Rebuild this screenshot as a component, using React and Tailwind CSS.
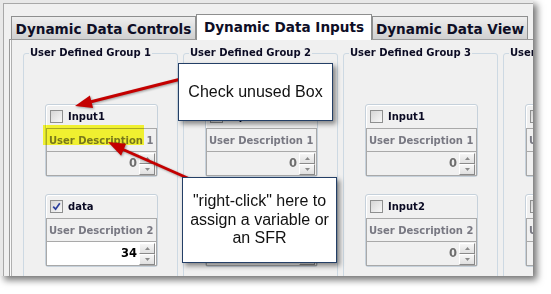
import React from "react";

const groups = [
  {
    title: "User Defined Group 1",
    items: [
      { label: "Input1", desc: "User Description 1", value: "0" },
      { label: "data", desc: "User Description 2", value: "34", checked: true },
    ],
  },
  {
    title: "User Defined Group 2",
    items: [
      { label: "Input1", desc: "User Description 1", value: "0" },
      { label: "Input2", desc: "User Description 2", value: "0" },
    ],
  },
  {
    title: "User Defined Group 3",
    items: [
      { label: "Input1", desc: "User Description 1", value: "0" },
      { label: "Input2", desc: "User Description 2", value: "0" },
    ],
  },
  {
    title: "User Defined Group 4",
    items: [
      { label: "Input1", desc: "User Description 1", value: "0" },
      { label: "Input2", desc: "User Description 2", value: "0" },
    ],
  },
];

function Check({ on }) {
  return (
    <span className="w-[13px] h-[13px] shrink-0 border border-[#8e8f8f] bg-gradient-to-br from-[#d6d6d6] to-[#f8f8f8] flex items-center justify-center">
      {on && (
        <svg width="9" height="9" viewBox="0 0 9 9">
          <path d="M1.2 4.6 L3.6 7.2 L7.8 1.2" fill="none" stroke="#2b3f9c" strokeWidth="1.7" />
        </svg>
      )}
    </span>
  );
}

function Spin() {
  return (
    <div className="ml-[2px] flex flex-col w-[16px] h-[22px]">
      <div className="flex-1 flex items-center justify-center border border-[#8a8a8a] border-l-white border-t-white bg-gradient-to-b from-[#f6f6f6] to-[#e0e0e0]">
        <svg width="5" height="3" viewBox="0 0 5 3">
          <path d="M0 3 L2.5 0 L5 3Z" fill="#8a8a8a" />
        </svg>
      </div>
      <div className="flex-1 flex items-center justify-center border border-[#8a8a8a] border-l-white border-t-white bg-gradient-to-b from-[#f6f6f6] to-[#e0e0e0]">
        <svg width="5" height="3" viewBox="0 0 5 3">
          <path d="M0 0 L2.5 3 L5 0Z" fill="#8a8a8a" />
        </svg>
      </div>
    </div>
  );
}

function Item({ label, desc, value, checked }) {
  return (
    <div className="w-[113px] rounded-[3px] border border-[#c6d1db] shadow-[inset_1px_1px_0_#ffffff]">
      <div className="h-[23px] flex items-center pl-[4px] gap-[5px]">
        <Check on={checked} />
        <span className="text-[10px] font-bold text-[#0b0b24]">{label}</span>
      </div>
      <div className="border border-[#a9a9a9]">
        <div className="h-[23px] flex items-center pl-[2px] border-b border-[#a9a9a9] text-[10px] font-bold text-[#787882] whitespace-nowrap">
          {desc}
        </div>
        <div
          className={`h-[23px] flex items-center justify-end pr-[1px] ${
            checked ? "bg-white" : ""
          }`}
        >
          <span className={`text-[11.5px] font-bold ${checked ? "text-black" : "text-[#6e6e6e]"}`}>
            {value}
          </span>
          <Spin />
        </div>
      </div>
    </div>
  );
}

function Group({ title, items }) {
  return (
    <fieldset className="w-[155px] h-[240px] shrink-0 border border-[#cdd9e3] rounded-[3px]">
      <legend className="ml-[5px] px-[1px] text-[10px] leading-[12px] font-bold text-[#0c0c24] whitespace-nowrap">
        {title}
      </legend>
      <div className="mt-[45px] pl-[21px] flex flex-col gap-[17px]">
        {items.map((it, i) => (
          <Item key={i} {...it} />
        ))}
      </div>
    </fieldset>
  );
}

function Tab({ children, active, w }) {
  if (active) {
    return (
      <div
        className={`${w} h-[26px] bg-white border border-b-0 border-[#8e8f8f] flex items-center justify-center text-[13.6px] font-bold text-[#0e0e26] whitespace-nowrap`}
      >
        {children}
      </div>
    );
  }
  return (
    <div
      className={`${w} h-[23px] mb-[1px] bg-gradient-to-b from-[#eeeeee] to-[#d0d0d0] border border-b-0 border-[#8e8f8f] flex items-center justify-center pt-[2px] text-[13.6px] font-bold text-[#0e0e26] whitespace-nowrap`}
    >
      {children}
    </div>
  );
}

export default function App() {
  return (
    <div className="relative w-[551px] h-[294px] bg-white overflow-hidden font-['DejaVu_Sans',sans-serif]">
      <div className="w-[533px] h-[276px] bg-[#e8e8e8] pt-[3px] pl-[3px] shadow-[4px_4px_7px_rgba(0,0,0,0.55)] overflow-hidden">
        <div className="h-full border-t border-l border-[#a8a8a8] bg-[#f0f0f0] pt-[10px]">
          <div className="relative z-10 -mb-px ml-[7px] flex items-end">
            <Tab w="w-[185px]">Dynamic Data Controls</Tab>
            <Tab w="w-[176px]" active>
              Dynamic Data Inputs
            </Tab>
            <Tab w="w-[156px]">Dynamic Data View</Tab>
          </div>
          <div className="ml-[5px] w-[600px] h-[260px] border-l border-t border-[#9a9a9a] shadow-[inset_1px_0_0_#fafafa,inset_2px_0_0_#b0b0b0] pt-[7px] pl-[13px] flex gap-[5px]">
            {groups.map((g, i) => (
              <Group key={i} {...g} />
            ))}
          </div>
        </div>
      </div>

      {/* highlight */}
      <div className="absolute left-[43px] top-[125px] w-[101px] h-[20px] bg-[#ffff00]/80 mix-blend-multiply" />

      {/* arrows */}
      <svg className="absolute left-0 top-0 pointer-events-none" width="551" height="294">
        <g style={{ filter: "drop-shadow(1px 1px 1px rgba(0,0,0,0.35))" }}>
          <line x1="185" y1="78" x2="91" y2="101.8" stroke="#c40000" strokeWidth="3" />
          <path d="M75 106 L93.1 108.1 L89.9 95.5Z" fill="#c40000" />
          <line x1="192" y1="180" x2="123" y2="149.5" stroke="#c40000" strokeWidth="3" />
          <path d="M108 142 L126.1 143.7 L121.1 155.7Z" fill="#c40000" />
        </g>
      </svg>

      {/* callouts */}
      <div className="absolute left-[178px] top-[63px] w-[155px] h-[58px] bg-white border border-[#243f66] shadow-[3px_3px_5px_rgba(0,0,0,0.45)] flex items-center justify-center font-['Liberation_Sans',sans-serif] text-[16px] text-[#111]">
        Check unused Box
      </div>
      <div className="absolute left-[182px] top-[177px] w-[155px] h-[86px] bg-white border border-[#243f66] shadow-[3px_3px_5px_rgba(0,0,0,0.45)] flex items-center justify-center text-center font-['Liberation_Sans',sans-serif] text-[16px] leading-[18.5px] text-[#111]">
        <span>
          "right-click" here to
          <br />
          assign a variable or
          <br />
          an SFR
        </span>
      </div>
    </div>
  );
}
